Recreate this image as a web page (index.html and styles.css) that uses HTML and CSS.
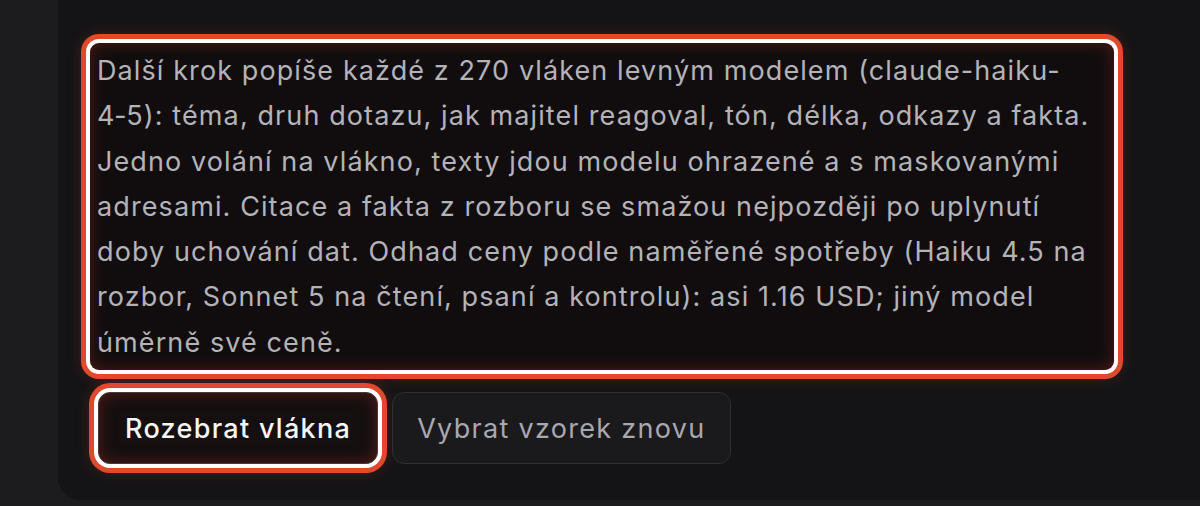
FILE: index.html
```html
<!DOCTYPE html>
<html lang="cs">
<head>
<meta charset="utf-8">
<link rel="stylesheet" href="styles.css">
</head>
<body>
<main class="page">
  <section class="card">
    <p class="note hl">Další krok popíše každé z 270 vláken levným modelem (claude-haiku-4&#8209;5): téma, druh dotazu, jak majitel reagoval, tón, délka, odkazy a fakta. Jedno volání na vlákno, texty jdou modelu ohrazené a s maskovanými adresami. Citace a fakta z rozboru se smažou nejpozději po uplynutí doby uchování dat. Odhad ceny podle naměřené spotřeby (Haiku 4.5 na rozbor, Sonnet 5 na čtení, psaní a kontrolu): asi 1.16 USD; jiný model úměrně své ceně.</p>
    <div class="actions">
      <button class="btn btn-primary hl" type="button">Rozebrat vlákna</button>
      <button class="btn btn-secondary" type="button">Vybrat vzorek znovu</button>
    </div>
  </section>
</main>
</body>
</html>
```
FILE: styles.css
```css
html, body {
  margin: 0;
  padding: 0;
  background: #1c1c1f;
  height: 100%;
  overflow: hidden;
}
body {
  font-family: Inter, "Noto Sans", sans-serif;
}
.page {
  padding-left: 58px;
  height: 500px;
}
.card {
  background: #141416;
  height: 100%;
  box-sizing: border-box;
  padding: 43px 0 0 40px;
  border-bottom-left-radius: 22px;
}
.hl {
  box-shadow:
    0 0 0 4px #ffffff,
    0 0 0 9px #e2482b,
    0 0 14px 9px rgba(226, 72, 43, 0.22),
    inset 0 0 16px rgba(200, 55, 35, 0.35);
}
.note {
  margin: 0 0 0 -8px;
  width: 1024px;
  box-sizing: border-box;
  padding: 5px 8px 5px 7px;
  font-size: 27px;
  letter-spacing: 1.1px;
  line-height: 45.3px;
  color: #b3b3b8;
  background: #110d0e;
  border-radius: 9px;
}
.actions {
  display: flex;
  gap: 14px;
  margin-top: 22px;
}
.btn {
  font-family: Inter, "Noto Sans", sans-serif;
  font-size: 27px;
  letter-spacing: 1.3px;
  height: 72px;
  padding: 0 24px;
  border-radius: 12px;
  border: 1px solid #2f2f34;
  cursor: pointer;
}
.btn-primary {
  background: #150f10;
  color: #f6f6f7;
  font-weight: 500;
  border-color: #4a3a3a;
  height: 72px;
  padding: 0 26px;
}
.btn-secondary {
  background: #1a1a1d;
  color: #a8a8ae;
  font-weight: 400;
}
```
